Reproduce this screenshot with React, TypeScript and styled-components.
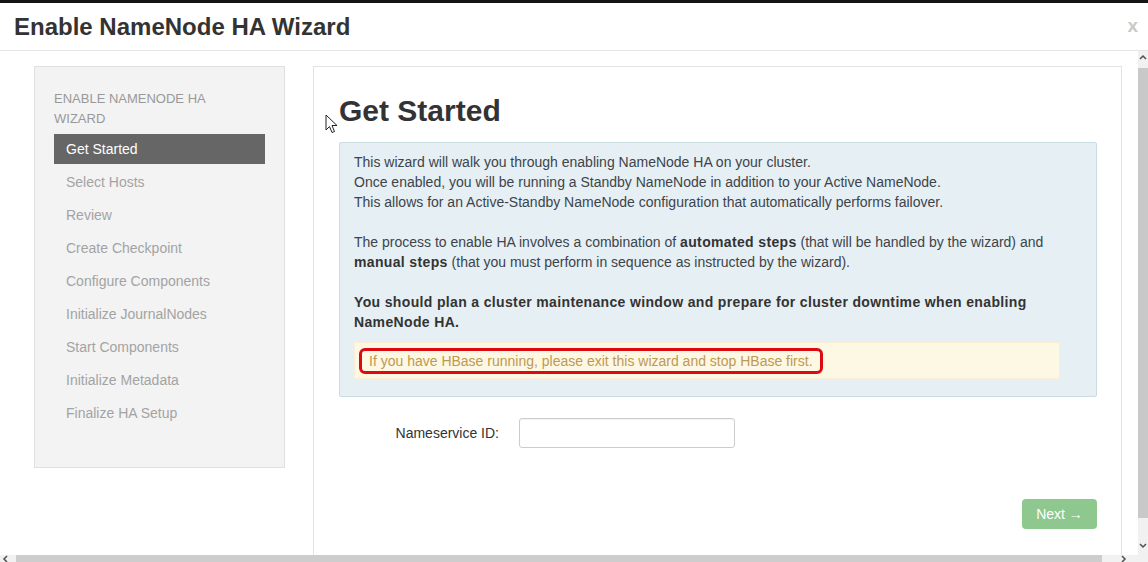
import styled, { createGlobalStyle } from "styled-components";

const GlobalStyle = createGlobalStyle`
  html, body {
    margin: 0;
    padding: 0;
    background: #fff;
  }
  body {
    font-family: "Liberation Sans", Arial, sans-serif;
    font-size: 14px;
    color: #333;
  }
`;

const Page = styled.div`
  width: 1148px;
  height: 562px;
  overflow: hidden;
  display: flex;
  flex-direction: column;
  border-top: 3px solid #141414;
  box-sizing: border-box;
  position: relative;
`;

const Header = styled.header`
  height: 47px;
  flex-shrink: 0;
  display: flex;
  align-items: center;
  justify-content: space-between;
  padding: 0 10px 0 14px;
  border-bottom: 1px solid #e5e5e5;
  h3 {
    margin: 0;
    font-size: 24px;
    font-weight: 700;
    color: #333;
    line-height: 30px;
  }
`;

const Close = styled.span`
  font-size: 19px;
  font-weight: 700;
  color: #c9c9c9;
  line-height: 20px;
  margin-top: -2px;
`;

const BodyRow = styled.div`
  flex: 1;
  display: flex;
  min-height: 0;
`;

const Viewport = styled.div`
  flex: 1;
  display: flex;
  align-items: flex-start;
  gap: 28px;
  padding: 15px 16px 0 34px;
  overflow: hidden;
`;

const Sidebar = styled.nav`
  width: 251px;
  height: 402px;
  flex-shrink: 0;
  box-sizing: border-box;
  background: #f3f3f3;
  border: 1px solid #e0e0e0;
  padding: 22px 19px 0 19px;
`;

const NavHeader = styled.div`
  font-size: 13px;
  line-height: 20px;
  color: #999;
  text-transform: uppercase;
  padding-right: 40px;
  margin-bottom: 5px;
`;

const NavItem = styled.div<{ $active?: boolean }>`
  height: 30px;
  line-height: 30px;
  margin-bottom: 3px;
  padding-left: 12px;
  font-size: 14px;
  color: ${(p) => (p.$active ? "#fff" : "#a3a3a3")};
  background: ${(p) => (p.$active ? "#666" : "transparent")};
`;

const Panel = styled.section`
  flex: 1;
  height: 600px;
  box-sizing: border-box;
  border: 1px solid #e3e3e3;
  padding: 24px 24px 0 25px;
  position: relative;
  h2 {
    margin: 0 0 11px;
    font-size: 30px;
    line-height: 40px;
    font-weight: 700;
    color: #333;
  }
`;

const InfoBox = styled.div`
  background: #e5eff4;
  border: 1px solid #cbdbe4;
  border-radius: 2px;
  padding: 9px 14px 17px;
  color: #3d444a;
  line-height: 20px;
  p {
    margin: 0 0 20px;
  }
  p:last-of-type {
    margin-bottom: 10px;
  }
  b {
    color: #333;
    letter-spacing: 0.35px;
  }
`;

const Warning = styled.div`
  margin-right: 22px;
  background: #fcf8e3;
  border: 1px solid #fbeed5;
  padding: 8px 14px 7px;
  color: #c09853;
  line-height: 20px;
`;

const Highlight = styled.span`
  position: relative;
  &::after {
    content: "";
    position: absolute;
    inset: -5px -10px -5px -10px;
    border: 3px solid #dd0a12;
    border-radius: 6px;
  }
`;

const FormRow = styled.div`
  display: flex;
  align-items: center;
  margin-top: 21px;
  label {
    width: 160px;
    text-align: right;
    color: #333;
    font-size: 14px;
  }
`;

const Input = styled.input`
  margin-left: 20px;
  width: 216px;
  height: 30px;
  box-sizing: border-box;
  border: 1px solid #ccc;
  border-radius: 3px;
  box-shadow: inset 0 1px 1px rgba(0, 0, 0, 0.05);
`;

const Footer = styled.div`
  display: flex;
  justify-content: flex-end;
  margin-top: 51px;
`;

const NextButton = styled.button`
  width: 75px;
  height: 30px;
  border: none;
  border-radius: 4px;
  background: #8fc88e;
  color: #fff;
  font-family: "Liberation Sans", Arial, sans-serif;
  font-size: 14px;
`;

const VScroll = styled.div`
  width: 10px;
  flex-shrink: 0;
  background: #f1f1f1;
  display: flex;
  flex-direction: column;
  align-items: center;
  padding: 3px 0 5px;
  box-sizing: border-box;
`;

const VThumb = styled.div`
  width: 10px;
  height: 450px;
  margin: 6px 0 auto;
  background: #c9c9c9;
`;

const HScroll = styled.div`
  height: 7px;
  flex-shrink: 0;
  background: #f1f1f1;
  display: flex;
  align-items: flex-start;
  padding: 0 20px 0 2px;
  gap: 6px;
`;

const HThumb = styled.div`
  flex: 1;
  height: 7px;
  background: #cdcdcd;
  margin-right: 12px;
`;

const Cursor = styled.svg`
  position: absolute;
  left: 11px;
  top: 47px;
`;

const Chevron = ({ dir }: { dir: "up" | "down" | "left" | "right" }) => {
  const pts = {
    up: "1,5 4,2 7,5",
    down: "1,2 4,5 7,2",
    left: "5,1 2,4 5,7",
    right: "2,1 5,4 2,7",
  }[dir];
  return (
    <svg width="8" height="8" viewBox="0 0 8 8">
      <polyline points={pts} fill="none" stroke="#505050" strokeWidth="1.5" />
    </svg>
  );
};

const steps = [
  "Get Started",
  "Select Hosts",
  "Review",
  "Create Checkpoint",
  "Configure Components",
  "Initialize JournalNodes",
  "Start Components",
  "Initialize Metadata",
  "Finalize HA Setup",
];

export default function App() {
  return (
    <>
      <GlobalStyle />
      <Page>
        <Header>
          <h3>Enable NameNode HA Wizard</h3>
          <Close>x</Close>
        </Header>
        <BodyRow>
          <Viewport>
            <Sidebar>
              <NavHeader>Enable NameNode HA Wizard</NavHeader>
              {steps.map((s, i) => (
                <NavItem key={s} $active={i === 0}>
                  {s}
                </NavItem>
              ))}
            </Sidebar>
            <Panel>
              <Cursor width="13" height="20" viewBox="0 0 13 20">
                <path
                  d="M1 1 L1 16 L4.5 12.5 L7 18.5 L9.5 17.5 L7 11.5 L12 11.5 Z"
                  fill="#fff"
                  stroke="#222"
                  strokeWidth="1"
                  strokeLinejoin="round"
                />
              </Cursor>
              <h2>Get Started</h2>
              <InfoBox>
                <p>
                  This wizard will walk you through enabling NameNode HA on your cluster.
                  <br />
                  Once enabled, you will be running a Standby NameNode in addition to your Active NameNode.
                  <br />
                  This allows for an Active-Standby NameNode configuration that automatically performs failover.
                </p>
                <p>
                  The process to enable HA involves a combination of <b>automated steps</b> (that will be
                  handled by the wizard) and <b>manual steps</b> (that you must perform in sequence as
                  instructed by the wizard).
                </p>
                <p>
                  <b>
                    You should plan a cluster maintenance window and prepare for cluster downtime when
                    enabling NameNode HA.
                  </b>
                </p>
                <Warning>
                  <Highlight>If you have HBase running, please exit this wizard and stop HBase first.</Highlight>
                </Warning>
              </InfoBox>
              <FormRow>
                <label>Nameservice ID:</label>
                <Input type="text" />
              </FormRow>
              <Footer>
                <NextButton>Next &rarr;</NextButton>
              </Footer>
            </Panel>
          </Viewport>
          <VScroll>
            <Chevron dir="up" />
            <VThumb />
            <Chevron dir="down" />
          </VScroll>
        </BodyRow>
        <HScroll>
          <Chevron dir="left" />
          <HThumb />
          <Chevron dir="right" />
        </HScroll>
      </Page>
    </>
  );
}
